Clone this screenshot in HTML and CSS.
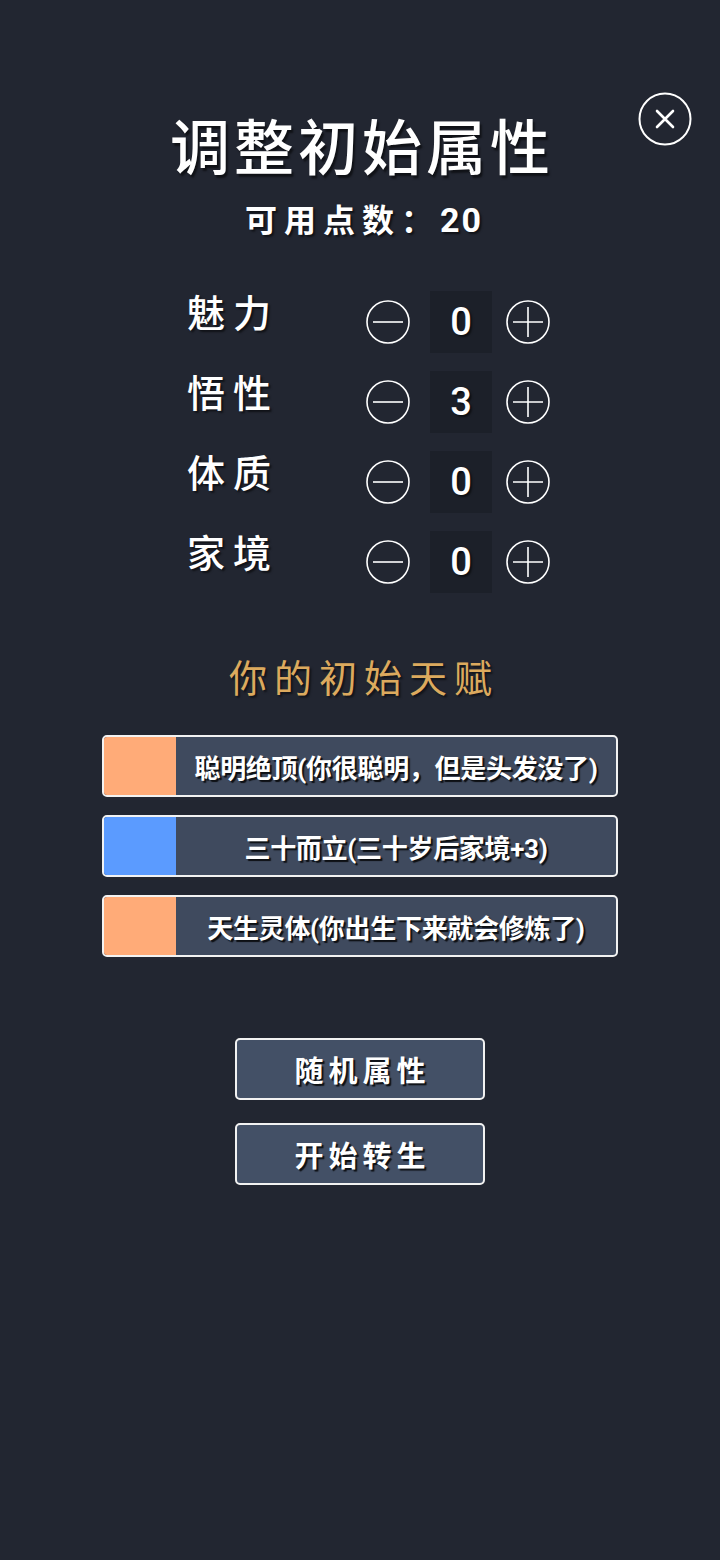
FILE: index.html
```html
<!DOCTYPE html>
<html lang="zh-CN">
<head>
    <meta charset="UTF-8">
    <title>调整初始属性</title>
    <meta name="viewport" content="width=device-width, initial-scale=1.0">
    <link rel="stylesheet" href="styles.css">
</head>
<body>
    <div class="page">
        <button class="close-btn" aria-label="关闭">
            <svg viewBox="0 0 54 54" width="54" height="54">
                <circle cx="27" cy="27" r="25.5" fill="none" stroke="#fff" stroke-width="2"/>
                <path d="M19 19 L35 35 M35 19 L19 35" stroke="#fff" stroke-width="2.6" stroke-linecap="round"/>
            </svg>
        </button>

        <h1 class="title">调整初始属性</h1>
        <p class="points">可用点数：<span class="points-num">20</span></p>

        <div class="attrs">
            <div class="attr-row">
                <span class="attr-name">魅力</span>
                <button class="step"><svg viewBox="0 0 44 44"><circle cx="22" cy="22" r="21" /><path d="M7 22 H37" /></svg></button>
                <span class="attr-value">0</span>
                <button class="step"><svg viewBox="0 0 44 44"><circle cx="22" cy="22" r="21" /><path d="M7 22 H37 M22 7 V37" /></svg></button>
            </div>
            <div class="attr-row">
                <span class="attr-name">悟性</span>
                <button class="step"><svg viewBox="0 0 44 44"><circle cx="22" cy="22" r="21" /><path d="M7 22 H37" /></svg></button>
                <span class="attr-value">3</span>
                <button class="step"><svg viewBox="0 0 44 44"><circle cx="22" cy="22" r="21" /><path d="M7 22 H37 M22 7 V37" /></svg></button>
            </div>
            <div class="attr-row">
                <span class="attr-name">体质</span>
                <button class="step"><svg viewBox="0 0 44 44"><circle cx="22" cy="22" r="21" /><path d="M7 22 H37" /></svg></button>
                <span class="attr-value">0</span>
                <button class="step"><svg viewBox="0 0 44 44"><circle cx="22" cy="22" r="21" /><path d="M7 22 H37 M22 7 V37" /></svg></button>
            </div>
            <div class="attr-row">
                <span class="attr-name">家境</span>
                <button class="step"><svg viewBox="0 0 44 44"><circle cx="22" cy="22" r="21" /><path d="M7 22 H37" /></svg></button>
                <span class="attr-value">0</span>
                <button class="step"><svg viewBox="0 0 44 44"><circle cx="22" cy="22" r="21" /><path d="M7 22 H37 M22 7 V37" /></svg></button>
            </div>
        </div>

        <h2 class="talent-title">你的初始天赋</h2>

        <div class="talents">
            <div class="talent">
                <span class="talent-color orange"></span>
                <span class="talent-text">聪明绝顶(你很聪明，但是头发没了)</span>
            </div>
            <div class="talent">
                <span class="talent-color blue"></span>
                <span class="talent-text">三十而立(三十岁后家境+3)</span>
            </div>
            <div class="talent">
                <span class="talent-color orange"></span>
                <span class="talent-text">天生灵体(你出生下来就会修炼了)</span>
            </div>
        </div>

        <div class="actions">
            <button class="action-btn">随机属性</button>
            <button class="action-btn">开始转生</button>
        </div>
    </div>
</body>
</html>
```

FILE: styles.css
```css
body {
    margin: 0;
    padding: 0;
    background: #222631;
    color: #fff;
    font-family: Roboto, "Noto Sans CJK SC", sans-serif;
}

button {
    font-family: inherit;
    color: inherit;
    cursor: pointer;
}

.page {
    position: relative;
    min-height: 1560px;
    padding-top: 118px;
    box-sizing: border-box;
}

.close-btn {
    position: absolute;
    top: 92px;
    left: 638px;
    width: 54px;
    height: 54px;
    padding: 0;
    border: none;
    background: none;
}

.close-btn svg {
    display: block;
}

.title {
    margin: 0;
    text-align: center;
    font-size: 60px;
    line-height: 64px;
    font-weight: 500;
    letter-spacing: 4px;
    padding-left: 4px;
    text-shadow: 2px 3px 2px rgba(0, 0, 0, 0.55);
}

.points {
    margin: 18px 0 0;
    text-align: center;
    font-size: 32px;
    line-height: 40px;
    font-weight: bold;
    letter-spacing: 7px;
    padding-left: 8px;
    text-shadow: 2px 2px 2px rgba(0, 0, 0, 0.55);
}

.points-num {
    font-size: 34px;
    letter-spacing: 2px;
}

.attrs {
    width: 364px;
    margin: 50px auto 0;
    padding-left: 18px;
    display: flex;
    flex-direction: column;
    gap: 18px;
}

.attr-row {
    display: flex;
    align-items: center;
    height: 62px;
}

.attr-name {
    width: 179px;
    font-size: 38px;
    line-height: 40px;
    font-weight: 500;
    letter-spacing: 8px;
    margin-top: -16px;
    text-shadow: 2px 2px 2px rgba(0, 0, 0, 0.55);
}

.step {
    width: 44px;
    height: 44px;
    padding: 0;
    border: none;
    background: none;
}

.step svg {
    display: block;
    width: 44px;
    height: 44px;
    fill: none;
    stroke: #fff;
    stroke-width: 1.6;
}

.attr-value {
    width: 62px;
    height: 62px;
    margin: 0 14px 0 20px;
    background: #1c2029;
    display: flex;
    align-items: center;
    justify-content: center;
    font-size: 38px;
    font-weight: 500;
    text-shadow: 2px 2px 2px rgba(0, 0, 0, 0.55);
}

.talent-title {
    margin: 62px 0 0;
    text-align: center;
    font-size: 38px;
    line-height: 48px;
    font-weight: normal;
    letter-spacing: 7px;
    padding-left: 8px;
    color: #dcaa5e;
    text-shadow: 2px 2px 2px rgba(0, 0, 0, 0.5);
}

.talents {
    width: 516px;
    margin: 32px auto 0;
    display: flex;
    flex-direction: column;
    gap: 18px;
}

.talent {
    display: flex;
    height: 62px;
    box-sizing: border-box;
    border: 2px solid #f2f2f2;
    border-radius: 5px;
    background: #3f4a5e;
    overflow: hidden;
}

.talent-color {
    width: 72px;
    flex-shrink: 0;
}

.talent-color.orange {
    background: #ffab78;
}

.talent-color.blue {
    background: #5b9bff;
}

.talent-text {
    flex: 1;
    display: flex;
    align-items: center;
    justify-content: center;
    font-size: 26px;
    font-weight: bold;
    letter-spacing: -0.3px;
    text-shadow: 2px 2px 1px rgba(0, 0, 0, 0.8);
}

.actions {
    margin-top: 81px;
    display: flex;
    flex-direction: column;
    align-items: center;
    gap: 23px;
}

.action-btn {
    width: 250px;
    height: 62px;
    border: 2px solid #f2f2f2;
    border-radius: 5px;
    background: #435066;
    font-size: 29px;
    font-weight: bold;
    letter-spacing: 5px;
    padding: 0 0 0 5px;
    text-shadow: 2px 2px 1px rgba(0, 0, 0, 0.8);
}
```
